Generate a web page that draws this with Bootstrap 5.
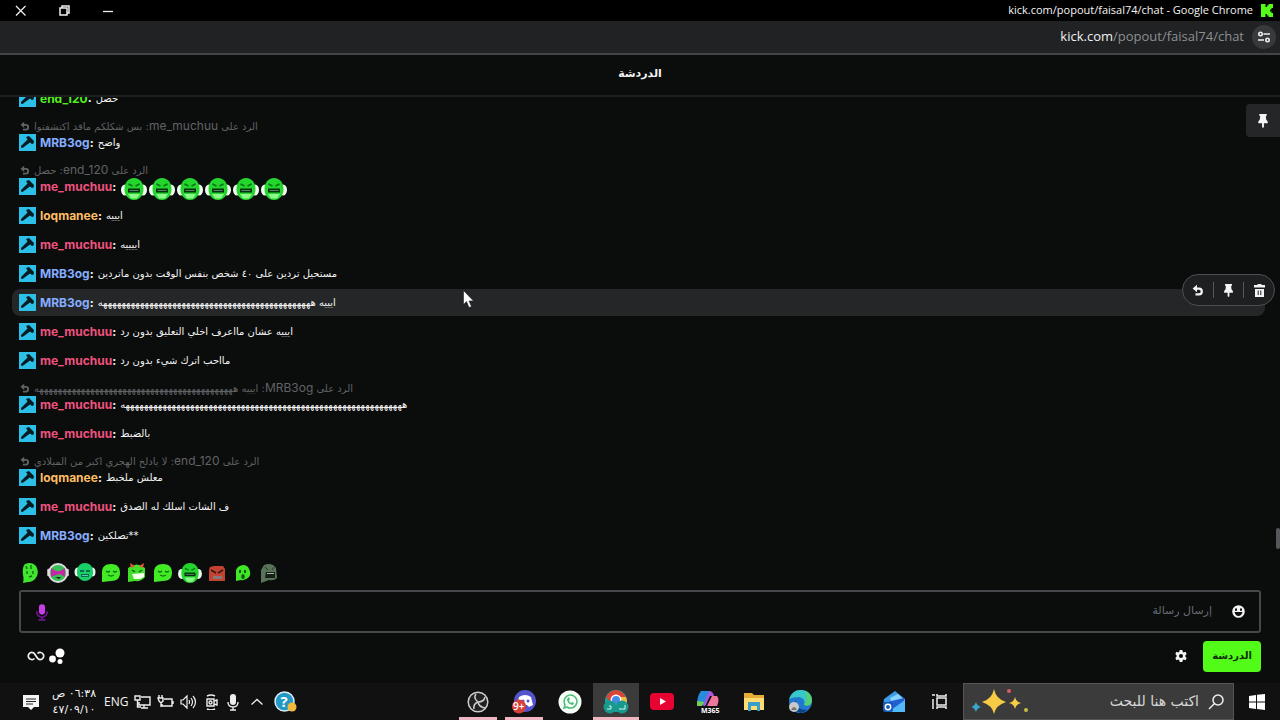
<!DOCTYPE html>
<html lang="ar">
<head>
<meta charset="utf-8">
<meta name="viewport" content="width=device-width, initial-scale=1">
<title>kick.com/popout/faisal74/chat</title>
<link href="https://cdn.jsdelivr.net/npm/bootstrap@5.3.0/dist/css/bootstrap.min.css" rel="stylesheet">
<style>
body{background:#0b0c0c;color:#f4f4f4;font-family:Inter,"DejaVu Sans",sans-serif;font-size:12px;height:100vh;overflow:hidden}
button,a{color:inherit;text-decoration:none}
button.plain{background:none;border:0;padding:0;display:flex;align-items:center;justify-content:center}
svg,.titlebar,.addr,.chathead,.emotes,.compose,.tools,.taskbar{flex:none}
svg{display:block}
.titlebar{background:#000;height:21px;font-family:"Open Sans",sans-serif;font-size:11px;font-weight:500;padding:0 7px 0 13px}
.addr{background:#202224;height:34px;border-bottom:2px solid #434445;font-family:"Open Sans",sans-serif;font-size:13px;padding-right:4px;color:#8e9092}
.addr b{color:#f1f1f1;font-weight:400}
.tune{width:24px;height:24px;border-radius:50%;background:#37393b!important}
.chathead{height:42px;border-bottom:2px solid #1d1f20;font-size:11px;font-weight:700;font-family:"DejaVu Sans",sans-serif;padding-bottom:2px}
.feed{min-height:0;overflow:hidden;padding:0 15px 7px 12px}
.msg{padding:5px 7px;margin-bottom:2px;border-radius:8px;flex:none}
.msg.on{background:#242628}
.line{height:17px;gap:4px}
.nick{font-weight:700;line-height:17px;white-space:nowrap}
.nick::after{content:":";color:#f4f4f4}
.ar{font-family:"DejaVu Sans",sans-serif;font-size:10px;line-height:17px;white-space:nowrap}
.laughs{height:21px}
.reply{height:15px;margin:4px 0 1px;gap:4px;color:#606365}
.reply .ar{line-height:15px}
.who{font-family:Inter,sans-serif;font-size:12px}
.rbox{width:10px;margin-left:1px}
.p{color:#f0527f}.b{color:#84acff}.o{color:#ffbe63}.g{color:#53ef1c}
.acts{top:-15px;right:-10px;width:93px;height:32px;border:1px solid #4d5052;border-radius:16px;background:#1d1f21}
.acts button{flex:1;height:16px}
.acts button+button{border-left:1px solid #55585a}
.pinned{top:104px;right:0;width:34px;height:33px;background:#242628!important;border-radius:4px 0 0 4px}
.thumb{right:0;top:528px;width:4px;height:21px;background:#55585a;border-radius:2px}
.pointer{left:463px;top:290px}
.emotes{height:29px;padding:0 20px;gap:4px}
.compose{margin:3px 19px 0;height:43px;border:2px solid #45474a;border-radius:3px;padding:0 14px}
.compose input{background:none;border:0;outline:0;color:#fff;font-family:"DejaVu Sans",sans-serif;font-size:11px;min-width:0}
.compose input::placeholder{color:#686e75;opacity:1}
.tools{height:50px;padding:0 19px 4px 27px}
.send{background:#53fc18;color:#0d2b06;height:31px;width:58px;border:0;border-radius:4px;font:700 10px "DejaVu Sans",sans-serif;padding:0 0 2px}
.taskbar{background:#111;height:37px;font-family:"Open Sans",sans-serif}
.tray{padding-left:22px;gap:6px}
.clock{font:11px/16px "DejaVu Sans",sans-serif;width:48px;text-align:center;white-space:nowrap}
.kbd-lang{font-size:12px}
.app{width:46px;height:37px}
button.run{background:linear-gradient(#efb6c2,#efb6c2) bottom/38px 3px no-repeat}
button.act{background:linear-gradient(#efb6c2,#efb6c2) bottom/46px 3px no-repeat #3b3b3b}
.search{background:#3b3b3b;border:1px solid #555;width:271px;height:37px;padding:0 8px}
.search input{background:none;border:0;outline:0;font-family:"DejaVu Sans",sans-serif;font-size:14px;min-width:0}
.search input::placeholder{color:#d6d6d6;opacity:1}
</style>
</head>
<body class="d-flex flex-column position-relative">
<svg width="0" height="0" class="position-absolute" aria-hidden="true"><defs>
<symbol id="mod" viewBox="0 0 17 17"><path fill="#2cc0e9" d="M0 0h17v17H0z"/><path fill="#071b22" d="M7 3l3-1 5 5-.5 2.500-1.500.5-2-1.500L3.500 14 2 13.500V12l6.500-6.500z"/></symbol>
<symbol id="undo" viewBox="0 0 12 12"><path fill="none" stroke="currentColor" stroke-width="2.200" d="M3.500 10.300H7a2.800 2.800 0 000-5.600H3"/><path fill="currentColor" d="M5 .8v7.500L.6 4.600z"/></symbol>
<symbol id="pin" viewBox="0 0 12 16"><path fill="currentColor" d="M2 1h8v2H9l.4 4L11 9v2H7v4l-1 1-1-1v-4H1V9l1.600-2L3 3H2z"/></symbol>
<symbol id="laugh" viewBox="0 0 26 24"><ellipse cx="4" cy="13" rx="4" ry="5.500" fill="#eefbef"/><ellipse cx="22" cy="13" rx="4" ry="5.500" fill="#eefbef"/><path fill="#24d52d" d="M13 1c6 0 9.500 5 9.500 11S19 23 13 23 3.500 18 3.500 12 7 1 13 1z"/><path fill="#8bfa8b" d="M7 17h12l-3 4.500h-6z"/><path fill="#06300e" d="M7 11.500h12v4H7z"/><path fill="#4d8a55" d="M8.500 13h9v1h-9z"/><path stroke="#0a701b" stroke-width="1.500" fill="none" d="M7.500 7l4 2M18.500 7l-4 2"/></symbol>
<symbol id="blob" viewBox="0 0 20 20"><path fill="#42ec25" d="M10 1c7 0 9 4 9 9s-3 8-9 8l-9 1V9c0-5 3-8 9-8z"/><path stroke="#167318" stroke-width="1.300" fill="none" d="M5 8q2 2 4 0m3 0q2 2 4 0m-9 4q3 2 6 0"/></symbol>
</defs></svg>

<header class="titlebar d-flex align-items-center justify-content-between">
 <div class="d-flex align-items-center">
  <button class="plain" aria-label="Close"><svg width="16" height="16" viewBox="0 0 16 16"><path stroke="#eee" stroke-width="1.300" d="M3 3l9.500 9.500M12.500 3L3 12.500"/></svg></button>
  <button class="plain ms-4 ps-1" aria-label="Restore"><svg width="16" height="16" viewBox="0 0 16 16"><path stroke="#eee" stroke-width="1.500" fill="none" d="M3 5h7v7H3zM5 5V3h7v7h-2"/></svg></button>
  <button class="plain ms-4 ps-1" aria-label="Minimize"><svg width="16" height="16" viewBox="0 0 16 16"><path stroke="#eee" stroke-width="1.300" d="M2 8.500h10"/></svg></button>
 </div>
 <div class="d-flex align-items-center gap-2"><span>kick.com/popout/faisal74/chat - Google Chrome</span><svg width="12" height="13" viewBox="0 0 12 13"><path fill="#53fc18" d="M0 0h4.500v3H6V1.500h1.500V0H12v4h-1.500v1.500H9v2h1.500V9H12v4H7.500v-1.500H6V10H4.500v3H0z"/></svg></div>
</header>
<div class="addr d-flex align-items-center justify-content-end gap-2"><span><b>kick.com</b>/popout/faisal74/chat</span>
 <button class="plain tune" aria-label="Site settings"><svg width="14" height="14" viewBox="0 0 14 14" fill="none" stroke="#eee" stroke-width="1.600"><circle cx="3.500" cy="4" r="1.700"/><path d="M6.500 4H13M1 10h6"/><circle cx="10.500" cy="10" r="1.700"/></svg></button></div>
<div class="chathead d-flex align-items-center justify-content-center">الدردشة</div>

<main class="feed flex-grow-1 d-flex flex-column justify-content-end">
 <div class="msg"><div class="line d-flex"><svg width="17" height="17"><use href="#mod"/></svg><span class="nick g">end_120</span><span class="ar" dir="rtl">حصل</span></div></div>
 <div class="msg pt-0"><div class="reply d-flex align-items-center"><svg class="rbox" height="10"><use href="#undo"/></svg><span class="ar" dir="rtl">الرد على <span class="who">me_muchuu</span>: بس شكلكم ماقد اكتشفتوا</span></div><div class="line d-flex"><svg width="17" height="17"><use href="#mod"/></svg><span class="nick b">MRB3og</span><span class="ar" dir="rtl">واضح</span></div></div>
 <div class="msg pt-0"><div class="reply d-flex align-items-center"><svg class="rbox" height="10"><use href="#undo"/></svg><span class="ar" dir="rtl">الرد على <span class="who">end_120</span>: حصل</span></div><div class="line d-flex"><svg width="17" height="17"><use href="#mod"/></svg><span class="nick p">me_muchuu</span><span class="laughs d-flex align-items-center"><svg width="28" height="24"><use href="#laugh"/></svg><svg width="28" height="24"><use href="#laugh"/></svg><svg width="28" height="24"><use href="#laugh"/></svg><svg width="28" height="24"><use href="#laugh"/></svg><svg width="28" height="24"><use href="#laugh"/></svg><svg width="28" height="24"><use href="#laugh"/></svg></span></div></div>
 <div class="msg"><div class="line d-flex"><svg width="17" height="17"><use href="#mod"/></svg><span class="nick o">loqmanee</span><span class="ar" dir="rtl">ايييه</span></div></div>
 <div class="msg"><div class="line d-flex"><svg width="17" height="17"><use href="#mod"/></svg><span class="nick p">me_muchuu</span><span class="ar" dir="rtl">اييييه</span></div></div>
 <div class="msg"><div class="line d-flex"><svg width="17" height="17"><use href="#mod"/></svg><span class="nick b">MRB3og</span><span class="ar" dir="rtl">مستحيل تردين على ٤٠ شخص بنفس الوقت بدون ماتردين</span></div></div>
 <div class="msg on position-relative"><div class="line d-flex"><svg width="17" height="17"><use href="#mod"/></svg><span class="nick b">MRB3og</span><span class="ar" dir="rtl">ايييه ههههههههههههههههههههههههههههههههههههههههههههههه</span></div>
  <div class="acts position-absolute d-flex align-items-center"><button class="plain" aria-label="Reply"><svg width="12" height="12"><use href="#undo"/></svg></button><button class="plain" aria-label="Pin"><svg width="11" height="14"><use href="#pin"/></svg></button><button class="plain" aria-label="Delete"><svg width="11" height="13" viewBox="0 0 11 13"><path fill="currentColor" fill-rule="evenodd" d="M3.500 0h4v1H11v2.500H0V1h3.500zM1 5h9v8H1zm2.700 1.500V11h1V6.500zm2.600 0V11h1V6.500z"/></svg></button></div></div>
 <div class="msg"><div class="line d-flex"><svg width="17" height="17"><use href="#mod"/></svg><span class="nick p">me_muchuu</span><span class="ar" dir="rtl">ايييه عشان مااعرف اخلي التعليق بدون رد</span></div></div>
 <div class="msg"><div class="line d-flex"><svg width="17" height="17"><use href="#mod"/></svg><span class="nick p">me_muchuu</span><span class="ar" dir="rtl">مااحب اترك شيء بدون رد</span></div></div>
 <div class="msg pt-0"><div class="reply d-flex align-items-center"><svg class="rbox" height="10"><use href="#undo"/></svg><span class="ar" dir="rtl">الرد على <span class="who">MRB3og</span>: ايييه هههههههههههههههههههههههههههههههههههههههههههه</span></div><div class="line d-flex"><svg width="17" height="17"><use href="#mod"/></svg><span class="nick p">me_muchuu</span><span class="ar" dir="rtl">هههههههههههههههههههههههههههههههههههههههههههههههههههههههههههههه</span></div></div>
 <div class="msg"><div class="line d-flex"><svg width="17" height="17"><use href="#mod"/></svg><span class="nick p">me_muchuu</span><span class="ar" dir="rtl">بالضبط</span></div></div>
 <div class="msg pt-0"><div class="reply d-flex align-items-center"><svg class="rbox" height="10"><use href="#undo"/></svg><span class="ar" dir="rtl">الرد على <span class="who">end_120</span>: لا يادلخ الهجري اكبر من الميلادي</span></div><div class="line d-flex"><svg width="17" height="17"><use href="#mod"/></svg><span class="nick o">loqmanee</span><span class="ar" dir="rtl">معلش ملخبط</span></div></div>
 <div class="msg"><div class="line d-flex"><svg width="17" height="17"><use href="#mod"/></svg><span class="nick p">me_muchuu</span><span class="ar" dir="rtl">ف الشات اسلك له الصدق</span></div></div>
 <div class="msg"><div class="line d-flex"><svg width="17" height="17"><use href="#mod"/></svg><span class="nick b">MRB3og</span><span class="ar" dir="rtl">**تصلكين</span></div></div>
</main>

<div class="emotes d-flex align-items-center">
 <button class="plain" aria-label="Emote 1"><svg width="22" height="22" viewBox="0 0 22 22"><path fill="#40e52d" d="M5 2q7-3 11 2 3 5 1 10-3 6-9 6l-5 1q1-4 0-8-1-8 2-11z"/><path stroke="#126b1b" stroke-width="1.400" d="M6 4l1 3m4-4v4M7 9v3m6-3v3m-4 3l3-1"/></svg></button>
 <button class="plain" aria-label="Emote 2"><svg width="24" height="22" viewBox="0 0 24 22"><circle cx="12" cy="11" r="9" fill="#37bf55" stroke="#ddd" stroke-width="2"/><path fill="#c628a5" d="M5 6l5 3h4l5-3v9l-5-3-4 1-5 2z"/><path stroke="#ddd" stroke-width="2.500" stroke-linecap="round" d="M2.500 8v5M21.500 8v5"/><path fill="#222" d="M9 15h6l-2 2z"/></svg></button>
 <button class="plain" aria-label="Emote 3"><svg width="22" height="22" viewBox="0 0 22 22"><ellipse cx="4" cy="10" rx="3.500" ry="4.500" fill="#e8f4ee"/><ellipse cx="18" cy="10" rx="3.500" ry="4.500" fill="#e8f4ee"/><path fill="#19cf67" d="M3 9q1-8 8-8t8 8v3q-2 7-8 7t-8-7z"/><path fill="#086c48" d="M6 8h4v2H6zm6 0h4v2h-4zm-5 4h8v3H7z"/><path fill="#5fc4b8" d="M8 13h6v1H8z"/></svg></button>
 <button class="plain" aria-label="Emote 4"><svg width="22" height="20"><use href="#blob"/></svg></button>
 <button class="plain" aria-label="Emote 5"><svg width="22" height="21" viewBox="0 0 22 21"><path fill="#42df2a" d="M2 6q9-7 17 0v9q-4 5-10 4l-7 1z"/><path fill="#eb5134" d="M4 1l5 3-4 2zM18 1l-5 3 4 2z"/><path fill="#f4ffe9" d="M6 12l12-1v4l-4 2H8z"/><path stroke="#135f16" stroke-width="1.500" d="M6 8l3 2m7-2l-3 2"/></svg></button>
 <button class="plain" aria-label="Emote 6"><svg width="22" height="20"><use href="#blob"/></svg></button>
 <button class="plain" aria-label="Emote 7"><svg width="24" height="22"><use href="#laugh"/></svg></button>
 <button class="plain" aria-label="Emote 8"><svg width="22" height="18" viewBox="0 0 20 18"><path fill="#c44232" d="M3 3l4-1h9l2 3v12H2V6z"/><path fill="none" stroke="#331512" stroke-width="1.500" d="M4 6l5 3m7-3l-5 3"/><path fill="#877" d="M6 12h9v3H6z"/></svg></button>
 <button class="plain" aria-label="Emote 9"><svg width="22" height="18" viewBox="0 0 18 18"><path fill="#3fe824" d="M4 3q6-4 10 0 4 6 1 10-4 4-8 3l-5 1V6z"/><path fill="#145518" d="M5 6h2v3H5zm5 0h2v3h-2z"/><ellipse cx="9" cy="12.500" rx="1.800" ry="2.500" fill="#145518"/></svg></button>
 <button class="plain" aria-label="Emote 10"><svg width="22" height="20" viewBox="0 0 20 20"><path fill="#587359" d="M5 2q8-3 12 3l1 10q-3 3-8 2l-8 3V7z"/><path fill="#162018" d="M7 9h9v6H6z"/><path fill="#aab4aa" d="M8 10h7v1H8z"/><path stroke="#24362a" d="M6 4l3 3m6-3l-2 3"/></svg></button>
</div>
<div class="compose d-flex align-items-center">
 <button class="plain" aria-label="Voice"><svg width="14" height="20" viewBox="0 0 16 20"><rect x="4.500" y="1" width="7" height="12" rx="3.500" fill="#c640e6"/><path d="M2 9v1a6 6 0 0012 0V9M8 16v3m-4 0h8" fill="none" stroke="#6c158c" stroke-width="2"/></svg></button>
 <input class="flex-grow-1 mx-3 px-1" dir="rtl" type="text" placeholder="إرسال رسالة" aria-label="إرسال رسالة">
 <button class="plain" aria-label="Emoji"><svg width="13" height="13" viewBox="0 0 13 13"><circle cx="6.500" cy="6.500" r="6.300" fill="#f4f4f4"/><path d="M3 3.500h2v2.200H3zm5 0h2v2.200H8zM2.500 7h8q-1 4-4 4t-4-4z" fill="#101112"/></svg></button>
</div>
<div class="tools d-flex align-items-center justify-content-between">
 <div class="d-flex align-items-center gap-1"><button class="plain" aria-label="Infinity"><svg width="18" height="12" viewBox="0 0 18 12"><path d="M7.500 8.500A3.600 3.600 0 115 2.400C9 2.400 9 9.600 13 9.600a3.600 3.600 0 10-2.500-6.100" fill="none" stroke="#eee" stroke-width="1.700"/></svg></button><button class="plain" aria-label="Points"><svg width="16" height="16" viewBox="0 0 16 16" fill="#fff"><circle cx="11" cy="5" r="4.500"/><circle cx="3.500" cy="11" r="3.400"/><circle cx="11" cy="13.500" r="2.500"/></svg></button></div>
 <div class="d-flex align-items-center gap-3"><button class="plain" aria-label="Settings"><svg width="12" height="12" viewBox="0 0 12 12"><path fill="#f4f4f4" fill-rule="evenodd" d="M4.700 0h2.600l.4 1.800 1 .6 1.800-.6L11.700 4l-1.300 1.300v1.400L11.700 8l-1.200 2.200-1.800-.6-1 .6-.4 1.800H4.700l-.4-1.800-1-.6-1.800.6L.3 8l1.300-1.300V5.300L.3 4l1.200-2.200 1.800.6 1-.6zM6 4a2 2 0 100 4 2 2 0 000-4z"/></svg></button><button class="send">الدردشة</button></div>
</div>

<footer class="taskbar d-flex align-items-center">
 <div class="tray d-flex align-items-center">
  <button class="plain" aria-label="Notifications"><svg width="18" height="18" viewBox="0 0 18 18"><path fill="#f5f5f5" d="M1 2h16v12h-5l-3 3-3-3H1z"/><path stroke="#222" d="M4 6h10M4 8.500h10M4 11h7"/></svg></button>
  <div class="clock ms-1" dir="rtl">٠٦:٣٨ ص<br>٤٧/٠٩/١٠</div>
  <span class="kbd-lang">ENG</span>
  <svg width="17" height="16" viewBox="0 0 17 16" fill="none" stroke="#eee" stroke-width="1.400"><path d="M7 3h9v8H5V8M7 14h7m-4-3v3M1 2h5v4H1zm2.500 4v7H7"/></svg>
  <svg width="17" height="16" viewBox="0 0 17 16" fill="none" stroke="#eee" stroke-width="1.400"><path d="M7 5h8v7H5v-2M1 4h5v3q-2 3-4 0zM2 4V1m3 3V1M4 8v5M16 7v3"/></svg>
  <svg width="17" height="16" viewBox="0 0 17 16" fill="none" stroke="#eee" stroke-width="1.200"><path d="M1 6h2l4-4v12l-4-4H1zM9 6q1 2 0 4m2-6q3 4 0 8m2-10q5 6 0 12"/></svg>
  <svg width="17" height="16" viewBox="0 0 17 16" fill="none" stroke="#eee" stroke-width="1.400"><path d="M4 5h7v7H4zm7 2l3-1v5l-3-1M4 2q4-2 8 0M4 15q4 2 8 0"/><circle cx="7.500" cy="8.500" r="1.500"/></svg>
  <svg width="14" height="18" viewBox="0 0 14 18"><rect x="4" y="1" width="6" height="11" rx="3" fill="#eee"/><path d="M2 9q0 5 5 5t5-5M7 14v3m-3 0h6" fill="none" stroke="#eee" stroke-width="1.400"/></svg>
  <button class="plain mx-1" aria-label="Show hidden icons"><svg width="14" height="14" viewBox="0 0 14 14"><path d="M1.500 9.500l5.500-5 5.500 5" fill="none" stroke="#eee" stroke-width="1.300"/></svg></button>
  <button class="plain" aria-label="Help"><svg width="23" height="22" viewBox="0 0 23 22"><circle cx="10.500" cy="10.500" r="9.500" fill="#2398c4" stroke="#d9eef5" stroke-width="1.500"/><text x="6.500" y="16" font-family="Open Sans" font-weight="700" font-size="15" fill="#fff">?</text><circle cx="18" cy="16" r="4.500" fill="#f1b93d"/></svg></button>
 </div>
 <nav class="d-flex ms-auto" aria-label="Apps">
  <button class="plain app run" aria-label="OBS"><svg width="22" height="22" viewBox="0 0 22 22"><circle cx="11" cy="11" r="9.800" fill="#222" stroke="#ccc" stroke-width="1.500"/><path d="M9 3q-3 4 2 8 6 0 7-5M11 11q-5 2-4 7m4-7q1 5 7 6" fill="none" stroke="#ccc" stroke-width="1.500"/></svg></button>
  <button class="plain app run" aria-label="Discord"><svg width="26" height="25" viewBox="0 0 26 25"><circle cx="14" cy="12" r="11" fill="#5554cf"/><path fill="#fff" d="M8 8q6-4 12 0l2 8-4 2-2-2h-4l-2 2-4-2z"/><circle cx="12" cy="12" r="1.500" fill="#5554cf"/><circle cx="17" cy="12" r="1.500" fill="#5554cf"/><circle cx="8" cy="17.500" r="7" fill="#d3403b"/><text x="2" y="21" font-family="Open Sans" font-weight="600" font-size="10" fill="#fff">9+</text></svg></button>
  <button class="plain app" aria-label="WhatsApp"><svg width="24" height="24" viewBox="0 0 24 24"><circle cx="12" cy="12" r="11.500" fill="#f5fff7"/><path d="M6 18l1-3a6.500 6.500 0 112 2z" fill="none" stroke="#4abd78" stroke-width="1.500"/><path d="M9 9q0 5 6 6l1-2-2-1-1 1q-2-1-2-3l1-1-1-2z" fill="#4abd78"/></svg></button>
  <button class="plain app act" aria-label="Chrome"><svg width="26" height="25" viewBox="0 0 26 25"><circle cx="13" cy="12" r="11" fill="#1aa69b"/><path fill="#d94338" d="M3 8Q7 1 13 1t10 7l-10 1-5 5z"/><path fill="#f1bd40" d="M14 8h9q3 8-4 13l-5-6z"/><circle cx="13" cy="11" r="5.500" fill="#fff"/><circle cx="13" cy="11" r="4" fill="#478be8"/><circle cx="7" cy="18" r="6.500" fill="#17998e"/><circle cx="19" cy="18" r="6.500" fill="#17998e"/><path stroke="#d8f4f1" fill="none" d="M4 20h4v-3H6m10 3h6v-4"/></svg></button>
  <button class="plain app" aria-label="YouTube"><svg width="24" height="18" viewBox="0 0 24 18"><rect width="24" height="17" rx="4" fill="#e80332"/><path fill="#fff" d="M10 5l6 3.500-6 3.500z"/></svg></button>
  <button class="plain app" aria-label="Microsoft 365"><svg width="26" height="25" viewBox="0 0 26 25"><path fill="#268cdb" d="M6 2h9l-4 14H2q0-9 4-14z"/><path fill="#74cf50" d="M2 12l7 1-2 4H2z"/><path fill="#ac55df" d="M14 2q4 0 5 5h-4l-5 10H8z"/><path fill="#ef759b" d="M17 7h5q3 3 0 10H12z"/><text x="6" y="24" font-family="Open Sans" font-weight="700" font-size="7" fill="#fff">M365</text></svg></button>
  <button class="plain app" aria-label="Files"><svg width="22" height="20" viewBox="0 0 22 20"><path fill="#e7ac35" d="M1 1h8l2 2h10v15H1z"/><path fill="#ffdc72" d="M1 6h20v12H1z"/><path fill="#399dcc" d="M5 10h12v9h-3v-5H8v5H5z"/></svg></button>
  <button class="plain app" aria-label="Edge"><svg width="26" height="25" viewBox="0 0 26 25"><circle cx="13.500" cy="12.500" r="11.500" fill="#2178ce"/><path fill="#38c8c8" d="M2 10Q6 0 15 1q10 1 10 11-1 5-8 4 2-7-5-8-6 0-10 2z"/><path fill="#58cf73" d="M18 2q9 4 6 13-3 3-7 1 5-7 1-14z"/><path fill="#0a4388" d="M9 11q-2 10 11 10-6 6-12 0-3-5 1-10z"/><circle cx="7" cy="18" r="5" fill="#c8c8c8"/><path fill="#777" d="M4 21q3-6 6 0z"/></svg></button>
 </nav>
 <button class="plain app ms-5" aria-label="Outlook"><svg width="24" height="23" viewBox="0 0 24 23"><path fill="#3b9cec" d="M2 9L13 1l10 8v13H4l-3-4z"/><path fill="#86d4fb" d="M8 8l8-4 6 6-11 7z"/><path fill="#245ed4" d="M1 13l21-5v11l-5 3H7z"/><path fill="#54b9f7" d="M9 20L23 10v12H8z"/><rect x="1" y="12" width="10" height="10" rx="2" fill="#155cb7"/><circle cx="6" cy="17" r="2.700" fill="none" stroke="#fff" stroke-width="1.500"/></svg></button>
 <button class="plain app" aria-label="Task view"><svg width="18" height="17" viewBox="0 0 18 17"><path d="M6 5h9v7H6zM6 1v2h9V1M6 16v-2h9v2M2 6v10M1 2h3" fill="none" stroke="#eee" stroke-width="1.500"/></svg></button>
 <div class="search d-flex align-items-center">
  <svg width="58" height="28" viewBox="0 0 58 28"><path fill="#f7cb46" d="M22 1q2 10 12 13-10 3-12 12-2-9-12-12 10-3 12-13zM43 9q1 5 6 6-5 1-6 6-1-5-6-6 5-1 6-6z"/><path fill="#37a8d0" d="M4 14q1 4 5 5-4 1-5 5-1-4-5-5 4-1 5-5z"/><circle cx="37" cy="3" r="2" fill="#d85c66"/><circle cx="54" cy="22" r="2" fill="#c4bd45"/></svg>
  <input class="flex-grow-1 px-2" type="text" dir="rtl" placeholder="اكتب هنا للبحث" aria-label="اكتب هنا للبحث">
  <svg width="18" height="18" viewBox="0 0 18 18"><circle cx="11" cy="7" r="5" fill="none" stroke="#eee" stroke-width="1.500"/><path d="M7.500 10.500L2 16" stroke="#eee" stroke-width="1.500"/></svg>
 </div>
 <button class="plain app" aria-label="Start"><svg width="16" height="16" viewBox="0 0 16 16"><path fill="#fff" d="M0 2l7-1v6.500H0zm8-1.200L16 0v7.500H8zM0 8.500h7V15l-7-1zm8 0h8V16l-8-1z"/></svg></button>
</footer>

<button class="plain pinned position-absolute" aria-label="Pinned messages"><svg width="12" height="15"><use href="#pin"/></svg></button>
<div class="thumb position-absolute"></div>
<svg class="pointer position-absolute" width="12" height="18" viewBox="0 0 12 18"><path fill="#fff" stroke="#222" stroke-width=".6" d="M.5.500v14l3-3 2.500 6 2.500-1-2.500-5.500h4.500z"/></svg>
<script src="https://cdn.jsdelivr.net/npm/bootstrap@5.3.0/dist/js/bootstrap.bundle.min.js"></script>
</body>
</html>
